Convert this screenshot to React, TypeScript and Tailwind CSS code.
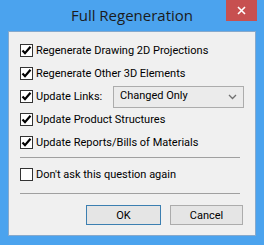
import React from 'react';

const titleFont = { fontFamily: '"Open Sans", "Noto Sans", sans-serif' };
const bodyFont = { fontFamily: 'Roboto, "Liberation Sans", sans-serif' };

const Check = ({ checked }: { checked: boolean }) => (
  <span className="w-[13px] h-[13px] border border-[#333333] bg-white flex items-center justify-center shrink-0">
    {checked && (
      <svg width="11" height="11" viewBox="0 0 11 11">
        <path d="M1.5 5.5 L4 8.2 L9.5 1.8" fill="none" stroke="#000" strokeWidth="2.2" />
      </svg>
    )}
  </span>
);

const Row = ({ label, checked = true }: { label: string; checked?: boolean }) => (
  <label className="flex items-center gap-[3px] h-[23px] text-[11px] text-black leading-none">
    <Check checked={checked} />
    <span>{label}</span>
  </label>
);

export default function App() {
  return (
    <div className="w-[264px] h-[245px] bg-[#4ba3ee] flex flex-col select-none" style={bodyFont}>
      {/* title bar */}
      <div className="h-[31px] flex relative">
        <div className="flex-1 flex items-center justify-center text-[15px] text-[#1b1b1b] pb-[1px]" style={titleFont}>
          Full Regeneration
        </div>
        <div className="absolute right-[7px] top-0 w-[31px] h-[21px] bg-[#c75050] flex items-center justify-center">
          <svg width="9" height="9" viewBox="0 0 9 9">
            <path d="M1 1 L8 8 M8 1 L1 8" stroke="#fff" strokeWidth="1.6" />
          </svg>
        </div>
      </div>

      {/* client */}
      <div className="mx-[8px] h-[205px] bg-[#f0f0f0] border border-[#86a9cc] flex flex-col px-[11px] pt-[7px]">
        <Row label="Regenerate Drawing 2D Projections" />
        <Row label="Regenerate Other 3D Elements" />
        <div className="flex items-center h-[23px]">
          <Row label="Update Links:" />
          <div className="ml-auto mr-[0px] w-[131px] h-[22px] border border-[#acacac] bg-[#ebebeb] flex items-center pl-[6px] pr-[6px] text-[11px] text-black">
            <span className="flex-1">Changed Only</span>
            <svg width="9" height="6" viewBox="0 0 9 6">
              <path d="M1 1 L4.5 4.5 L8 1" fill="none" stroke="#707070" strokeWidth="1.3" />
            </svg>
          </div>
        </div>
        <Row label="Update Product Structures" />
        <Row label="Update Reports/Bills of Materials" />
        <div className="mt-[3px] mr-[4px] border-t border-[#a0a0a0]" />
        <div className="mt-[5px]">
          <Row label="Don't ask this question again" checked={false} />
        </div>
        <div className="mt-[7px] mr-[4px] border-t border-[#a0a0a0]" />
        <div className="flex justify-end gap-[9px] mt-[11px] mr-[1px]">
          <button className="w-[75px] h-[20px] border border-[#3c7fb1] bg-[#e5e5e5] text-[11px] text-black leading-none">
            OK
          </button>
          <button className="w-[73px] h-[20px] border border-[#acacac] bg-[#e5e5e5] text-[11px] text-black leading-none">
            Cancel
          </button>
        </div>
      </div>
    </div>
  );
}
